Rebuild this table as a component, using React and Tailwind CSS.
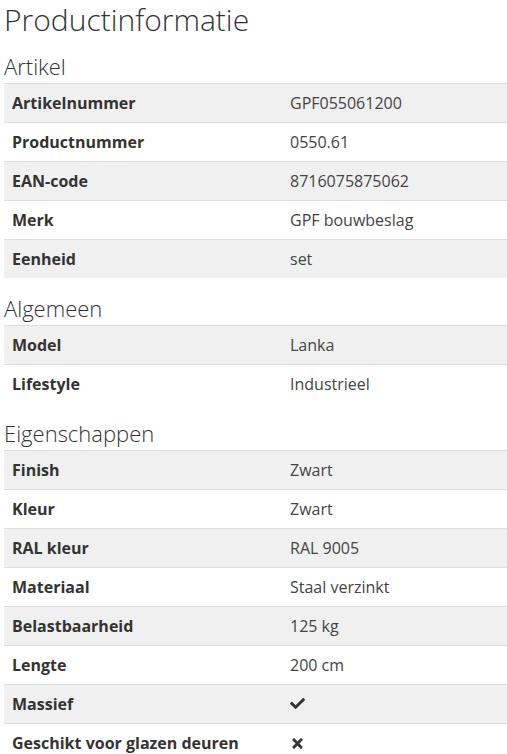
import { FaCheck, FaTimes } from "react-icons/fa";

const sections = [
  {
    title: "Artikel",
    rows: [
      ["Artikelnummer", "GPF055061200"],
      ["Productnummer", "0550.61"],
      ["EAN-code", "8716075875062"],
      ["Merk", "GPF bouwbeslag"],
      ["Eenheid", "set"],
    ],
  },
  {
    title: "Algemeen",
    rows: [
      ["Model", "Lanka"],
      ["Lifestyle", "Industrieel"],
    ],
  },
  {
    title: "Eigenschappen",
    rows: [
      ["Finish", "Zwart"],
      ["Kleur", "Zwart"],
      ["RAL kleur", "RAL 9005"],
      ["Materiaal", "Staal verzinkt"],
      ["Belastbaarheid", "125 kg"],
      ["Lengte", "200 cm"],
      ["Massief", "check"],
      ["Geschikt voor glazen deuren", "times"],
    ],
  },
];

const Value = ({ value }) => {
  if (value === "check") return <FaCheck className="text-[#333] text-[15px] mt-[3px]" />;
  if (value === "times") return <FaTimes className="text-[#333] text-[15px] mt-[4px]" />;
  return <span>{value}</span>;
};

const App = () => {
  return (
    <div className="pl-[4px] bg-white text-[#333] font-['Open_Sans',sans-serif] min-h-[754px] overflow-hidden">
      <h1 className="text-[30px] font-light leading-[38px] text-[#333] pt-[1px]">
        Productinformatie
      </h1>
      {sections.map((section) => (
        <div key={section.title}>
          <h3 className="text-[22px] font-light leading-[26px] mt-[14px] mb-[4px] text-[#333] [&:not(:first-child)]:mt-0">
            {section.title}
          </h3>
          <div className="flex flex-col">
            {section.rows.map(([label, value], i) => (
              <div
                key={label}
                className={`flex border-t border-[#ddd] text-[16px] leading-[22px] py-[8px] ${
                  i % 2 === 0 ? "bg-[#f0f0f0]" : "bg-white"
                }`}
              >
                <span className="w-[278px] px-[8px] font-bold text-[#333]">{label}</span>
                <span className="px-[8px] text-[#444]">
                  <Value value={value} />
                </span>
              </div>
            ))}
          </div>
          <div className="h-[3px]" />
        </div>
      ))}
    </div>
  );
};

export default App;
